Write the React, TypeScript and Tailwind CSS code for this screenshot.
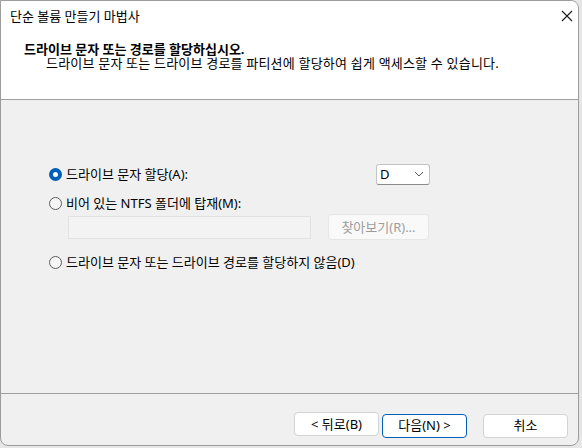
import React from 'react';

const FONT = { fontFamily: '"Segoe UI", "Noto Sans", "Noto Sans CJK KR", sans-serif' };

// --- 라디오 버튼 ---
const Radio = ({ checked }: { checked?: boolean }) =>
  checked ? (
    <span className="w-[13px] h-[13px] rounded-full bg-[#005fb8] flex items-center justify-center shrink-0">
      <span className="w-[5px] h-[5px] rounded-full bg-white" />
    </span>
  ) : (
    <span className="w-[13px] h-[13px] rounded-full border border-[#5c5c5c] bg-[#f5f5f5] shrink-0" />
  );

const WizButton = ({ label, primary }: { label: string; primary?: boolean }) => (
  <button
    className={
      primary
        ? 'w-[85px] h-[24px] rounded-[4px] bg-white border border-[#005fb8] text-[13px] text-black leading-none'
        : 'w-[85px] h-[24px] rounded-[4px] bg-white border border-[#d3d3d3] text-[13px] text-black leading-none'
    }
  >
    {label}
  </button>
);

export default function App() {
  return (
    <div className="w-[582px] h-[448px] bg-[#e6e6e6] overflow-hidden" style={FONT}>
      <div className="w-[579px] h-[446px] flex flex-col border border-[#9c9c9c] rounded-tr-[8px] rounded-b-[8px] overflow-hidden bg-[#f0f0f0]">
        {/* 헤더 */}
        <div className="h-[99px] bg-white border-b border-[#a0a0a0] shrink-0">
          <div className="h-[30px] flex items-center justify-between pl-[9px] pr-[5px]">
            <span className="text-[13px] text-black leading-none">단순 볼륨 만들기 마법사</span>
            <svg width="12" height="12" viewBox="0 0 12 12">
              <path d="M1 1 L11 11 M11 1 L1 11" stroke="#1a1a1a" strokeWidth="1.1" />
            </svg>
          </div>
          <div className="pl-[23px] pt-[11px] text-[13px] font-bold text-black leading-[14px]">
            드라이브 문자 또는 경로를 할당하십시오.
          </div>
          <div className="pl-[45px] text-[13px] text-black leading-[14px] tracking-[0.2px]">
            드라이브 문자 또는 드라이브 경로를 파티션에 할당하여 쉽게 액세스할 수 있습니다.
          </div>
        </div>

        {/* 본문 */}
        <div className="flex-1 border-b border-[#a0a0a0] pl-[48px] pt-[63px] text-[13px] text-black">
          <div className="flex items-center h-[22px]">
            <div className="w-[327px] flex items-center gap-[4px]">
              <Radio checked />
              <span className="leading-none">드라이브 문자 할당(A):</span>
            </div>
            <div className="w-[54px] h-[21px] bg-white border border-[#c4c4c4] border-b-[#8a8a8a] rounded-[3px] flex items-center justify-between pl-[3px] pr-[5px]">
              <span className="leading-none">D</span>
              <svg width="10" height="6" viewBox="0 0 10 6">
                <path d="M1 1 L5 5 L9 1" stroke="#5a5a5a" strokeWidth="1" fill="none" />
              </svg>
            </div>
          </div>
          <div className="flex items-center h-[22px] mt-[7px] gap-[4px]">
            <Radio />
            <span className="leading-none">비어 있는 NTFS 폴더에 탑재(M):</span>
          </div>
          <div className="flex items-center h-[26px] pl-[19px]">
            <div className="w-[243px] h-[23px] border border-[#e2e2e2] bg-[#f3f3f3]" />
            <div className="ml-[17px] w-[101px] h-[26px] rounded-[4px] border border-[#e6e6e6] bg-[#f9f9f9] flex items-center justify-center text-[#9d9d9d] leading-none">
              찾아보기(R)...
            </div>
          </div>
          <div className="flex items-center h-[22px] mt-[11px] gap-[4px]">
            <Radio />
            <span className="leading-none">드라이브 문자 또는 드라이브 경로를 할당하지 않음(D)</span>
          </div>
        </div>

        {/* 하단 버튼 */}
        <div className="h-[51px] shrink-0 flex items-start justify-end pt-[18px] pr-[10px]">
          <WizButton label="< 뒤로(B)" />
          <div className="ml-[3px]">
            <WizButton label="다음(N) >" primary />
          </div>
          <div className="ml-[16px]">
            <WizButton label="취소" />
          </div>
        </div>
      </div>
    </div>
  );
}
